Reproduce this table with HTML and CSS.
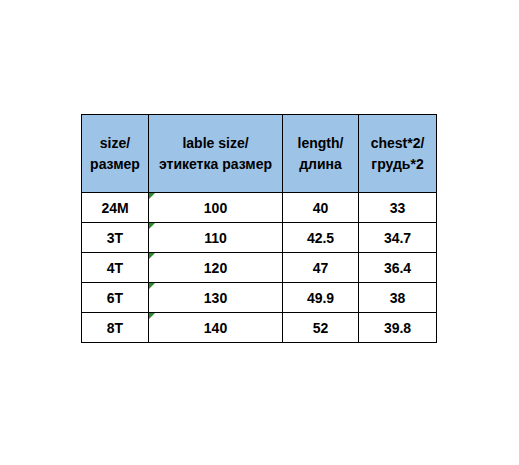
FILE: index.html
```html
<!DOCTYPE html>
<html>
<head>
<meta charset="utf-8">
<link rel="stylesheet" href="styles.css">
</head>
<body>
<div class="wrap">
<table class="sizes">
  <colgroup>
    <col class="c1"><col class="c2"><col class="c3"><col class="c4">
  </colgroup>
  <thead>
    <tr class="head">
      <th>size/<br>размер</th>
      <th>lable size/<br>этикетка размер</th>
      <th>length/<br>длина</th>
      <th>chest*2/<br>грудь*2</th>
    </tr>
  </thead>
  <tbody>
    <tr><td>24M</td><td class="mark">100</td><td>40</td><td>33</td></tr>
    <tr><td>3T</td><td class="mark">110</td><td>42.5</td><td>34.7</td></tr>
    <tr><td>4T</td><td class="mark">120</td><td>47</td><td>36.4</td></tr>
    <tr><td>6T</td><td class="mark">130</td><td>49.9</td><td>38</td></tr>
    <tr><td>8T</td><td class="mark">140</td><td>52</td><td>39.8</td></tr>
  </tbody>
</table>
</div>
</body>
</html>
```

FILE: styles.css
```css
html, body {
  margin: 0;
  padding: 0;
  background: #ffffff;
}
.wrap {
  padding: 114px 0 0 81px;
}
.sizes {
  border-collapse: collapse;
  table-layout: fixed;
  width: 356px;
  font-family: "Liberation Sans", Arial, sans-serif;
  font-weight: bold;
  font-size: 14px;
  color: #000;
}
.c1 { width: 67px; }
.c2 { width: 134px; }
.c3 { width: 76px; }
.c4 { width: 78px; }
.sizes th, .sizes td {
  border: 1px solid #000;
  text-align: center;
  vertical-align: middle;
  padding: 0;
}
.sizes th {
  background: #9dc3e6;
  font-weight: bold;
  line-height: 21px;
}
.head { height: 78px; }
.sizes tbody tr { height: 30px; }
.mark { position: relative; }
.mark::before {
  content: "";
  position: absolute;
  left: 0;
  top: 0;
  width: 6px;
  height: 6px;
  background: #2a8a2a;
  clip-path: polygon(0 0, 100% 0, 0 100%);
}
```
